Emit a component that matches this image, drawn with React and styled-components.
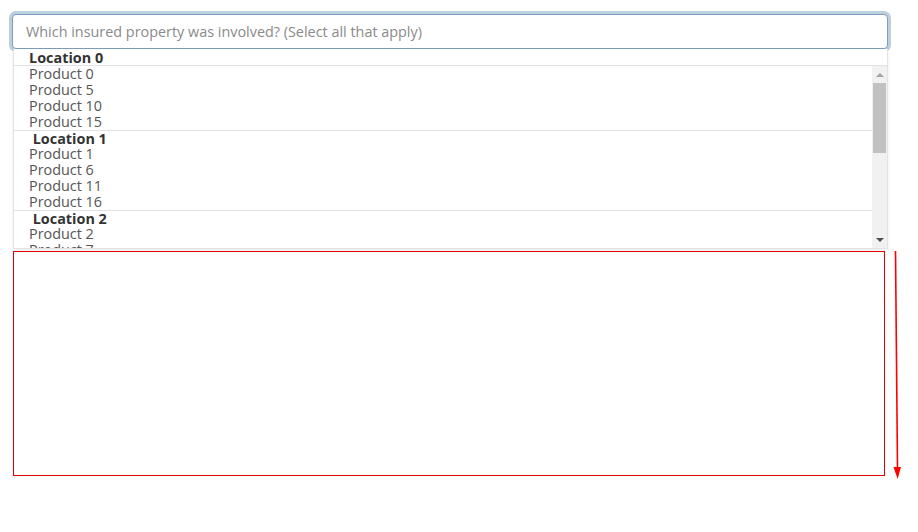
import React from "react";
import styled, { createGlobalStyle } from "styled-components";

const GlobalStyle = createGlobalStyle`
  html, body {
    margin: 0;
    padding: 0;
    background: #fff;
  }
  body {
    font-family: "Open Sans", "Liberation Sans", sans-serif;
  }
`;

const groups = [
  { label: "Location 0", items: ["Product 0", "Product 5", "Product 10", "Product 15"] },
  { label: " Location 1", items: ["Product 1", "Product 6", "Product 11", "Product 16"] },
  { label: " Location 2", items: ["Product 2", "Product 7", "Product 12", "Product 17"] },
  { label: " Location 3", items: ["Product 3", "Product 8", "Product 13", "Product 18"] },
];

export default function App() {
  const [first, ...rest] = groups;
  return (
    <Page>
      <GlobalStyle />
      <Picker>
        <Search placeholder="Which insured property was involved? (Select all that apply)" autoFocus />
        <Menu>
          <StickyHeader>{first.label}</StickyHeader>
          <ListRow>
            <Scroller>
              {first.items.map((item) => (
                <Item key={item}>{item}</Item>
              ))}
              {rest.map((group) => (
                <Group key={group.label}>
                  <GroupHeader>{group.label}</GroupHeader>
                  {group.items.map((item) => (
                    <Item key={item}>{item}</Item>
                  ))}
                </Group>
              ))}
            </Scroller>
            <Scrollbar>
              <ScrollArrow up />
              <Track>
                <Thumb />
              </Track>
              <ScrollArrow />
            </Scrollbar>
          </ListRow>
        </Menu>
      </Picker>
      <CanvasRow>
        <DropZone />
        <Pointer width="10" height="229" viewBox="0 0 10 229">
          <line x1="3.5" y1="0" x2="5.5" y2="218" stroke="#f00" strokeWidth="1.6" />
          <polygon points="1.5,216 9,216 5.6,228" fill="#f00" />
        </Pointer>
      </CanvasRow>
    </Page>
  );
}

const Page = styled.div`
  padding: 14px 0 0 12px;
  width: 900px;
`;

const Picker = styled.div`
  display: flex;
  flex-direction: column;
  width: 876px;
`;

const Search = styled.input`
  box-sizing: border-box;
  width: 876px;
  height: 35px;
  padding: 0 13px;
  border: 1px solid #7d9dbd;
  border-radius: 4px;
  box-shadow: 0 0 0 3px #bccfdd;
  outline: none;
  font-family: "Open Sans", "Liberation Sans", sans-serif;
  font-size: 14.4px;
  color: #333;
  caret-color: #222;

  &::placeholder {
    color: #8a8a8a;
  }
`;

const Menu = styled.div`
  box-sizing: border-box;
  margin-left: 1px;
  width: 875px;
  height: 200px;
  display: flex;
  flex-direction: column;
  border: 1px solid #e3e3e3;
  border-top: 0;
  box-shadow: 0 2px 4px rgba(0, 0, 0, 0.08);
  background: #fff;
`;

const GroupHeader = styled.div`
  height: 15px;
  line-height: 15px;
  padding-left: 15px;
  font-size: 14.4px;
  font-weight: 700;
  color: #333;
  white-space: pre;
  flex: none;
`;

const StickyHeader = styled(GroupHeader)`
  height: 15px;
  padding-top: 1px;
  border-bottom: 1px solid #e1e1e6;
`;

const Group = styled.div`
  border-top: 1px solid #e1e1e6;
`;

const ListRow = styled.div`
  flex: 1;
  display: flex;
  min-height: 0;
`;

const Scroller = styled.div`
  flex: 1;
  overflow: hidden;
`;

const Item = styled.div`
  height: 16px;
  line-height: 16px;
  padding-left: 15px;
  font-size: 14.4px;
  color: #555;
`;

const Scrollbar = styled.div`
  width: 15px;
  display: flex;
  flex-direction: column;
  background: #f1f1f1;
`;

const ScrollArrow = styled.div`
  height: 17px;
  display: flex;
  align-items: center;
  justify-content: center;

  &::before {
    content: "";
    width: 0;
    height: 0;
    border-left: 4px solid transparent;
    border-right: 4px solid transparent;
    ${(p) =>
      p.up
        ? "border-bottom: 4px solid #a3a3a3;"
        : "border-top: 4px solid #505050;"}
  }
`;

const Track = styled.div`
  flex: 1;
  padding: 0 1px;
`;

const Thumb = styled.div`
  height: 70px;
  background: #c1c1c1;
`;

const CanvasRow = styled.div`
  display: flex;
  align-items: flex-start;
  margin-top: 2px;
  gap: 7px;
`;

const DropZone = styled.div`
  box-sizing: border-box;
  flex: none;
  margin-left: 1px;
  width: 872px;
  height: 225px;
  border: 1px solid #e00000;
`;

const Pointer = styled.svg`
  display: block;
  flex: none;
`;
